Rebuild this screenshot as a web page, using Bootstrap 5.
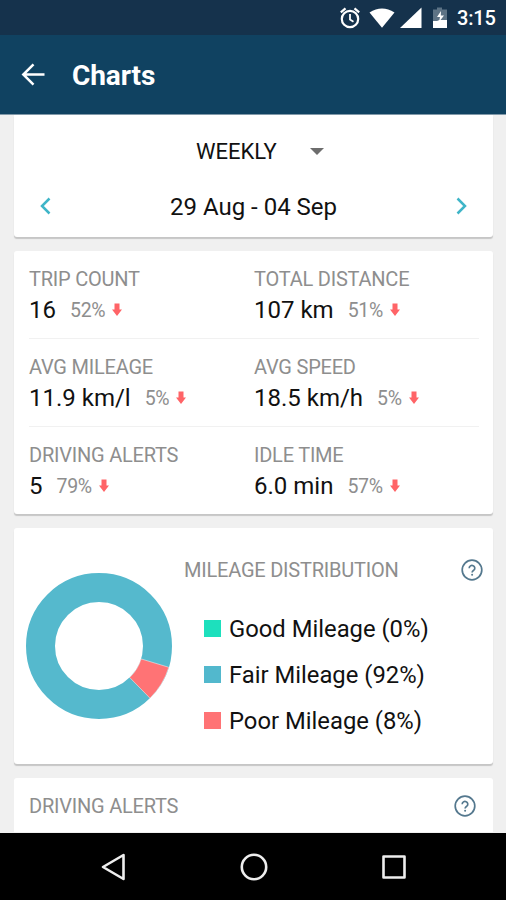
<!DOCTYPE html>
<html lang="en">
<head>
<meta charset="utf-8">
<meta name="viewport" content="width=device-width, initial-scale=1">
<title>Charts</title>
<link href="https://cdn.jsdelivr.net/npm/bootstrap@5.3.0/dist/css/bootstrap.min.css" rel="stylesheet">
<style>
  body { font-family: Roboto, "Liberation Sans", sans-serif; background: #f0f0f0; color: #111; width: 506px; height: 900px; overflow: hidden; line-height: 30px; }
  svg { display: block; flex: none; }
  .status-strip { height: 35px; background: #15324c; color: #fff; font-size: 20px; padding-right: 10px; }
  .status-time { font-weight: 500; line-height: 34px; width: 39px; white-space: nowrap; letter-spacing: -.2px; padding-top: 1px; }
  .status-icons { margin-right: 10px; }
  .app-header { height: 79px; background: #104261; color: #fff; padding: 0 0 0 21px; gap: 26px; }
  .app-title { font-size: 28px; font-weight: 700; letter-spacing: -.1px; padding-top: 3px; }
  .content-pane { padding: 0 13px 0 14px; gap: 14px; border-top: 1px solid #8199a9; }
  .panel { background: #fff; border: 0; border-radius: 3px; box-shadow: 0 2px 1px #c6c6c6; }
  .panel-period { height: 122px; border-radius: 0 0 3px 3px; }
  .period-row { height: 72px; padding: 2px 0 0 182px; font-size: 22px; gap: 33px; }
  .period-row svg { margin-top: -2px; }
  .date-row { height: 38px; padding: 0 25px; font-size: 24px; }
  .date-text { padding-top: 2px; }
  .panel-stats { height: 263px; padding: 0 14px 0 15px; }
  .stat-line { height: 88px; padding-top: 13px; border-bottom: 1px solid #f1f1f1; }
  .stat-line:last-child { border: 0; }
  .stat-cell { width: 225px; }
  .label { font-size: 20px; font-weight: 400; color: #8e8e8e; white-space: nowrap; letter-spacing: -.22px; }
  .stat-value { font-size: 24px; white-space: nowrap; line-height: 28px; }
  .stat-change { font-size: 19.500px; font-weight: 400; color: #8e8e8e; margin-left: 14px; margin-right: 7px; padding-top: 3px; letter-spacing: -.3px; }
  .panel-mileage { height: 236px; padding: 0 10px 0 11px; }
  .legend-col { padding: 27px 0 0 11px; }
  .legend-item { height: 46px; font-size: 23.800px; gap: 8px; padding-left: 20px; white-space: nowrap; }
  .legend-item .swatch { margin-top: -1px; }
  .swatch { width: 17px; height: 17px; }
  .swatch-good { background: #1de0bd; }
  .swatch-fair { background: #52b8cd; }
  .swatch-poor { background: #ff7375; }
  .legend-list { padding-top: 21px; }
  .panel-alerts { height: 54px; padding: 2px 17px 0 15px; border-radius: 3px 3px 0 0; box-shadow: none; }
  .system-nav { height: 67px; background: #000; padding: 0 99px 0 100px; }
</style>
<script src="https://cdn.jsdelivr.net/npm/bootstrap@5.3.0/dist/js/bootstrap.bundle.min.js"></script>
</head>
<body class="d-flex flex-column">
<svg class="d-none">
  <symbol id="down" viewBox="0 0 10 14"><path d="M2.500.5h5v6H10L5 13 0 6.500h2.500z" fill="#ff6467"/></symbol>
  <symbol id="help" viewBox="0 0 22 22"><circle cx="11" cy="11" r="9.800" fill="none" stroke="#54788e" stroke-width="1.700"/><path d="M8.200 9.200a2.800 2.700 0 1 1 4.600 2c-1.100.8-1.700 1.200-1.700 2.300" fill="none" stroke="#54788e" stroke-width="1.700"/><circle cx="11.100" cy="15.700" r="1" fill="#54788e"/></symbol>
</svg>

<div class="status-strip d-flex align-items-center justify-content-end">
  <svg class="status-icons" width="107" height="24" viewBox="0 0 107 24">
    <g fill="none" stroke="#fff" stroke-width="2.200"><circle cx="10" cy="13" r="8.200"/><path d="M10 8v5.500l3.500 2.200" stroke-width="1.800"/><path d="M.8 6.300 5.500 2.300M14.500 2.300 19.200 6.300"/></g>
    <path d="M29.500 6.500Q42 -1.500 54.500 6.500L42 21.800z" fill="#fff"/>
    <path d="M81.500 1.500v20.500h-21.500z" fill="#fff"/>
    <path d="M97 1.500h5v2h5v12H93v-12h4z" fill="#5d7385"/><path d="M93 15h4l2.500-1h7.500v8H93z" fill="#fff"/><path d="m101 5-4 6h3l-1 5 5-6.500h-3.200z" fill="#fff"/>
  </svg>
  <span class="status-time">3:15</span>
</div>

<header class="app-header d-flex align-items-center">
  <svg width="25" height="24" viewBox="0 0 25 24" fill="none" stroke="#fff" stroke-width="2.500"><path d="M23.500 11.500H2.500M12.500 1.300 2.300 11.500l10.200 10.200"/></svg>
  <h1 class="app-title mb-0">Charts</h1>
</header>

<main class="content-pane d-flex flex-column flex-grow-1">
  <section class="panel panel-period">
    <div class="period-row d-flex align-items-center"><span>WEEKLY</span>
      <svg width="14" height="7" viewBox="0 0 14 7"><path d="M0 0h14L7 7z" fill="#6d6d6d"/></svg></div>
    <div class="date-row d-flex align-items-center justify-content-between">
      <svg width="12" height="18" viewBox="0 0 12 18" fill="none" stroke="#3fb5c8" stroke-width="2.500"><path d="M10.500 1.500 3 9l7.500 7.500"/></svg>
      <span class="date-text">29 Aug - 04 Sep</span>
      <svg width="12" height="18" viewBox="0 0 12 18" fill="none" stroke="#3fb5c8" stroke-width="2.500"><path d="M1.500 1.500 9 9l-7.500 7.500"/></svg>
    </div>
  </section>

  <section class="panel panel-stats">
    <div class="stat-line d-flex">
      <div class="stat-cell"><div class="label">TRIP COUNT</div><div class="stat-value d-flex align-items-center">16<span class="stat-change">52%</span><svg width="10" height="14"><use href="#down"/></svg></div></div>
      <div class="stat-cell"><div class="label">TOTAL DISTANCE</div><div class="stat-value d-flex align-items-center">107 km<span class="stat-change">51%</span><svg width="10" height="14"><use href="#down"/></svg></div></div>
    </div>
    <div class="stat-line d-flex">
      <div class="stat-cell"><div class="label">AVG MILEAGE</div><div class="stat-value d-flex align-items-center">11.9 km/l<span class="stat-change">5%</span><svg width="10" height="14"><use href="#down"/></svg></div></div>
      <div class="stat-cell"><div class="label">AVG SPEED</div><div class="stat-value d-flex align-items-center">18.5 km/h<span class="stat-change">5%</span><svg width="10" height="14"><use href="#down"/></svg></div></div>
    </div>
    <div class="stat-line d-flex">
      <div class="stat-cell"><div class="label">DRIVING ALERTS</div><div class="stat-value d-flex align-items-center">5<span class="stat-change">79%</span><svg width="10" height="14"><use href="#down"/></svg></div></div>
      <div class="stat-cell"><div class="label">IDLE TIME</div><div class="stat-value d-flex align-items-center">6.0 min<span class="stat-change">57%</span><svg width="10" height="14"><use href="#down"/></svg></div></div>
    </div>
  </section>

  <section class="panel panel-mileage d-flex">
    <svg class="align-self-center" width="148" height="148" viewBox="-74 -74 148 148">
      <circle r="58.500" fill="none" stroke="#55b9cd" stroke-width="29"/>
      <path d="M69.800 21.300A73 73 0 0 1 51 52.200L30.700 31.500A44 44 0 0 0 42.100 12.900z" fill="#ff7375" stroke="#fff" stroke-opacity=".6" stroke-width=".8"/>
    </svg>
    <div class="legend-col flex-grow-1">
      <div class="d-flex justify-content-between align-items-center"><span class="label">MILEAGE DISTRIBUTION</span><svg width="22" height="22"><use href="#help"/></svg></div>
      <div class="legend-list">
        <div class="legend-item d-flex align-items-center"><span class="swatch swatch-good"></span>Good Mileage (0%)</div>
        <div class="legend-item d-flex align-items-center"><span class="swatch swatch-fair"></span>Fair Mileage (92%)</div>
        <div class="legend-item d-flex align-items-center"><span class="swatch swatch-poor"></span>Poor Mileage (8%)</div>
      </div>
    </div>
  </section>

  <section class="panel panel-alerts d-flex align-items-center justify-content-between">
    <span class="label">DRIVING ALERTS</span><svg width="22" height="22"><use href="#help"/></svg>
  </section>
</main>

<nav class="system-nav d-flex align-items-center justify-content-between">
  <svg width="26" height="28" viewBox="0 0 26 28" fill="none" stroke="#eee" stroke-width="2.600" stroke-linejoin="round"><path d="M23.500 2v24L3 14z"/></svg>
  <svg width="28" height="28" viewBox="0 0 28 28" fill="none" stroke="#eee" stroke-width="2.600"><circle cx="14" cy="14" r="12.200"/></svg>
  <svg width="26" height="26" viewBox="0 0 26 26" fill="none" stroke="#eee" stroke-width="2.600" stroke-linejoin="round"><path d="M2.500 2.500h21v21h-21z"/></svg>
</nav>
</body>
</html>
